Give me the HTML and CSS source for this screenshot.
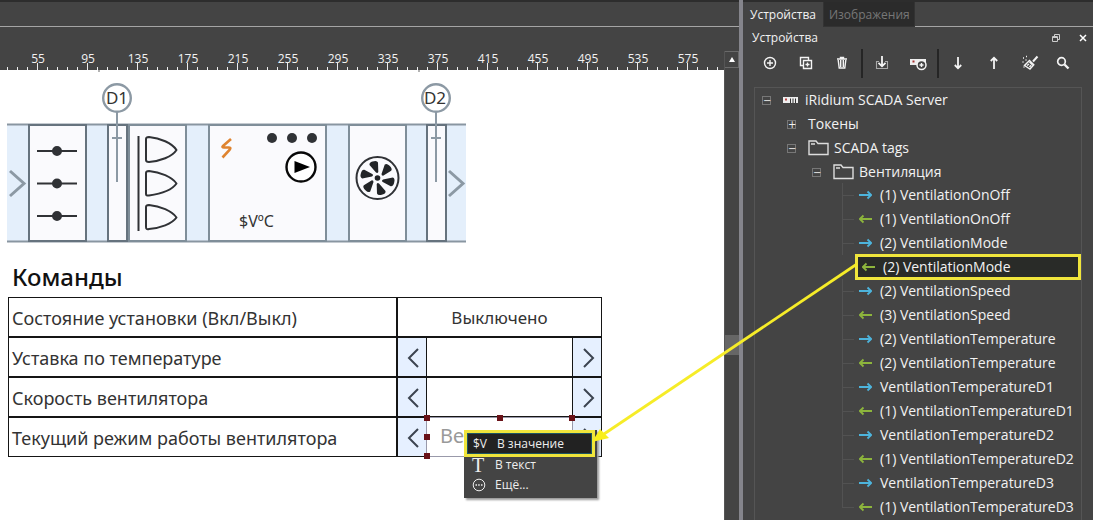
FILE: index.html
```html
<!DOCTYPE html>
<html lang="ru">
<head>
<meta charset="utf-8">
<title>iRidium SCADA</title>
<link rel="stylesheet" href="styles.css">
</head>
<body>
<div class="app">
  <main class="editor">
    <div class="editor-top"></div>
    <div class="workspace">
      <div class="work">
        <div class="ruler">
          <span>55</span><span>95</span><span>135</span><span>175</span><span>215</span><span>255</span><span>295</span><span>335</span><span>375</span><span>415</span><span>455</span><span>495</span><span>535</span><span>575</span>
        </div>
        <div class="canvas">
          <svg class="scheme" width="480" height="190" viewBox="0 70 480 190" role="img" aria-label="Вентиляция">
            <path d="M98 71h2M418 71h2" stroke="#666" stroke-width="1"/>
            <rect x="7" y="125" width="459" height="117" fill="#e4effb"/>
            <path d="M7 124.500H466M7 241.500H466" stroke="#8996a1" stroke-width="2"/>
            <g fill="#fafafd" stroke="#7f8e99" stroke-width="2">
              <rect x="129" y="125" width="57" height="116"/>
              <rect x="209" y="125" width="117" height="116"/>
              <rect x="349" y="125" width="57" height="116"/>
            </g>
            <g fill="#fafafd" stroke="#66737e" stroke-width="2">
              <rect x="29" y="125" width="57" height="116"/>
              <rect x="108" y="125" width="19" height="116"/>
              <rect x="427" y="125" width="19" height="116"/>
            </g>
            <g fill="none" stroke="#8c99a4" stroke-width="2">
              <path d="M117 112V182M112 138H122M436 112V182M431 138H441"/>
              <circle cx="117" cy="98" r="13.800" fill="#fff" stroke-width="2.400"/>
              <circle cx="436" cy="98" r="13.800" fill="#fff" stroke-width="2.400"/>
              <path d="M10 171L24 183.500L10 196M449 171L463 183.500L449 196" stroke-width="3"/>
            </g>
            <g fill="#303236" stroke="#303236" stroke-width="2">
              <path d="M37 151H77M37 183.500H77M37 216H77"/>
              <circle cx="57" cy="151" r="4"/><circle cx="57" cy="183.500" r="4"/><circle cx="57" cy="216" r="4"/>
            </g>
            <g fill="none" stroke="#303236" stroke-width="2" stroke-linejoin="round">
              <path d="M138.500 136V231"/>
              <path d="M146 139Q146 137 149 137C160 138 172 143 176.500 150C172 157 160 161 149 162Q146 162 146 160Z"/>
              <path d="M146 173Q146 171 149 171C160 172 172 177 176.500 183.500C172 190 160 194 149 195.500Q146 196 146 194Z"/>
              <path d="M146 207Q146 205 149 205C160 206 172 211 176.500 217.500C172 224 160 228 149 229Q146 230 146 227Z"/>
            </g>
            <path d="M231 139L223 146Q221.500 147.500 224 147.500H229Q231.500 147.500 229.500 150L222.500 157.500" fill="none" stroke="#df8430" stroke-width="2.600"/>
            <g fill="#303236"><circle cx="272" cy="138" r="5"/><circle cx="292" cy="138" r="5"/><circle cx="312" cy="138" r="5"/></g>
            <circle cx="301" cy="167" r="14.500" fill="#fff" stroke="#080808" stroke-width="2.400"/>
            <path d="M294.500 161L310 167L294.500 173Z"/>
            <circle cx="377.500" cy="178" r="21" fill="#fafafd" stroke="#303236" stroke-width="2"/>
            <g fill="#222427" transform="translate(377.500 178)">
              <circle r="2.800"/>
              <path id="blade" d="M-1.500 -5.500L-8 -13Q-8.500 -15.500 -5 -16.500Q-.500 -18 .500 -15.500L.800 -6Q0 -4.500 -1.500 -5.500Z"/>
              <use href="#blade" transform="rotate(60)"/><use href="#blade" transform="rotate(120)"/><use href="#blade" transform="rotate(180)"/><use href="#blade" transform="rotate(240)"/><use href="#blade" transform="rotate(300)"/>
            </g>
            <text class="sensor" x="117" y="104">D1</text>
            <text class="sensor" x="435" y="104">D2</text>
            <text class="temp" x="239" y="227">$VºC</text>
          </svg>
          <h1 class="heading">Команды</h1>
          <table class="commands">
            <colgroup><col class="c-label"><col class="c-step"><col class="c-value"><col class="c-step"></colgroup>
            <tr><th scope="row">Состояние установки (Вкл/Выкл)</th><td colspan="3" class="state">Выключено</td></tr>
            <tr><th scope="row">Уставка по температуре</th>
              <td class="step"><button aria-label="Меньше"><svg width="13" height="20" viewBox="0 0 13 20"><path d="M11 1L2 10L11 19"/></svg></button></td><td class="value"></td>
              <td class="step"><button aria-label="Больше"><svg width="13" height="20" viewBox="0 0 13 20"><path d="M2 1L11 10L2 19"/></svg></button></td></tr>
            <tr><th scope="row">Скорость вентилятора</th>
              <td class="step"><button aria-label="Меньше"><svg width="13" height="20" viewBox="0 0 13 20"><path d="M11 1L2 10L11 19"/></svg></button></td><td class="value"></td>
              <td class="step"><button aria-label="Больше"><svg width="13" height="20" viewBox="0 0 13 20"><path d="M2 1L11 10L2 19"/></svg></button></td></tr>
            <tr><th scope="row">Текущий режим работы вентилятора</th>
              <td class="step"><button aria-label="Меньше"><svg width="13" height="20" viewBox="0 0 13 20"><path d="M11 1L2 10L11 19"/></svg></button></td>
              <td class="value selected">Ве
                <i class="handle tl"></i><i class="handle tc"></i><i class="handle tr"></i><i class="handle ml"></i><i class="handle bl"></i>
                <div class="menu">
                  <button class="menu-item active"><span class="menu-icon">$V</span>В значение</button>
                  <button class="menu-item"><span class="menu-icon serif">T</span>В текст</button>
                  <button class="menu-item"><span class="menu-icon"><svg width="14" height="14" viewBox="0 0 14 14"><circle cx="7" cy="7" r="5.800" fill="none" stroke="#eee"/><path d="M3.500 7h1.500M6.200 7h1.500M9 7h1.500" stroke="#eee" stroke-width="1.500"/></svg></span>Ещё...</button>
                </div>
              </td>
              <td class="step"><button aria-label="Больше"><svg width="13" height="20" viewBox="0 0 13 20"><path d="M2 1L11 10L2 19"/></svg></button></td></tr>
          </table>
        </div>
      </div>
      <div class="scroll">
        <button class="scroll-up" aria-label="Вверх"><svg width="6" height="5" viewBox="0 0 6 5"><path d="M3 0L6 5H0Z" fill="#fff"/></svg></button>
        <div class="scroll-thumb"></div>
      </div>
    </div>
  </main>
  <aside class="panel">
    <div class="tabs">
      <button class="tab on">Устройства</button><button class="tab">Изображения</button><span class="tab-rest"></span>
    </div>
    <header class="title"><span>Устройства</span>
      <button aria-label="Открепить"><svg width="8" height="8" viewBox="0 0 8 8" fill="none" stroke="#ccc"><path d="M2.500 2V.500H7.500V5.500H6"/><path d="M.500 2.500H5.500V7.500H.500ZM.500 3.500H5.500"/></svg></button>
      <button aria-label="Закрыть"><svg width="8" height="8" viewBox="0 0 8 8"><path d="M1 1L7 7M7 1L1 7" stroke="#fff" stroke-width="1.500"/></svg></button>
    </header>
    <div class="toolbar">
      <button aria-label="Добавить"><svg viewBox="0 0 16 16"><circle cx="8" cy="8" r="5.500"/><path d="M8 5V11M5 8H11"/></svg></button>
      <button aria-label="Дублировать"><svg viewBox="0 0 16 16" stroke-width="1.200"><path d="M5.500 10.500H2.500V2.500H10.500V5.500M5.500 5.500H13.500V13.500H5.500ZM9.500 7.500V11.500M7.500 9.500H11.500"/></svg></button>
      <button aria-label="Удалить"><svg viewBox="0 0 16 16"><path d="M3 4H13M6.500 3.500V2.500H9.500V3.500M4.200 5L5.200 13H10.800L11.800 5M6.700 5V12M9.300 5V12"/></svg></button>
      <span class="sep"></span>
      <button aria-label="Импорт"><svg viewBox="0 0 16 16"><path d="M5 6.500H2.500V13.500H13.500V6.500H11" stroke="#aaa" stroke-width="1.100"/><path d="M8 1V11M4.500 7.800L8 11.300L11.500 7.800" stroke-width="1.800"/></svg></button>
      <button aria-label="Добавить устройство"><svg viewBox="0 0 16 16"><path d="M0 4H16V10H0Z" fill="#eee" stroke="none"/><path d="M2.500 6.500H4.500" stroke="#a33" stroke-width="2"/><circle cx="11.500" cy="10" r="4.500" fill="#444" stroke-width="1.500"/><path d="M11.500 8V12M9.500 10H13.500"/></svg></button>
      <span class="sep"></span>
      <button aria-label="Вниз"><svg viewBox="0 0 16 16"><path d="M8 2V13M4.800 10L8 13.300L11.200 10" stroke-width="1.800"/></svg></button>
      <button aria-label="Вверх"><svg viewBox="0 0 16 16"><path d="M8 14V3M4.800 6L8 2.700L11.200 6" stroke-width="1.800"/></svg></button>
      <button aria-label="Очистить"><svg viewBox="0 0 16 16" stroke-width="1.200"><path d="M15.500 1.500L11 6.500" stroke-width="2"/><path d="M7.500 5.500L11.800 9.800L8 14L2.500 10.500ZM7.500 7L10.500 10M5 10.500L7 9M7.500 12L9 10.200"/><path d="M1 3H2M4 1.500H5M3.500 5H4.500M.500 7H1.500M1.500 12H2.500"/></svg></button>
      <button aria-label="Поиск"><svg viewBox="0 0 16 16"><circle cx="6.500" cy="6.500" r="3.800" stroke-width="1.700"/><path d="M9.500 9.500L13.500 13.500" stroke-width="2.400"/></svg></button>
    </div>
    <div class="tree">
      <div class="node"><button class="exp" aria-label="Свернуть">−</button><svg class="server" width="15" height="7" viewBox="0 0 15 7"><path d="M0 0H15V6H0Z" fill="#eee"/><path d="M2 2.500H4" stroke="#b44" stroke-width="2"/><path d="M7.500 1.500V6M10 1.500V6M12.500 1.500V6" stroke="#333"/></svg>iRidium SCADA Server</div>
      <div class="node l1"><button class="exp" aria-label="Развернуть">+</button>Токены</div>
      <div class="node l1 folder"><button class="exp" aria-label="Свернуть">−</button><svg width="21" height="16" viewBox="0 0 21 16"><path d="M1 14.500V1H8L10 3.500H20V14.500ZM3 4H7" /></svg>SCADA tags</div>
      <div class="node l2 folder"><button class="exp" aria-label="Свернуть">−</button><svg width="21" height="16" viewBox="0 0 21 16"><path d="M1 14.500V1H8L10 3.500H20V14.500ZM3 4H7" /></svg>Вентиляция</div>
      <ul class="tags">
        <li class="in">(1) VentilationOnOff</li>
        <li class="out">(1) VentilationOnOff</li>
        <li class="in">(2) VentilationMode</li>
        <li class="out picked">(2) VentilationMode</li>
        <li class="in">(2) VentilationSpeed</li>
        <li class="out">(3) VentilationSpeed</li>
        <li class="in">(2) VentilationTemperature</li>
        <li class="out">(2) VentilationTemperature</li>
        <li class="in">VentilationTemperatureD1</li>
        <li class="out">(1) VentilationTemperatureD1</li>
        <li class="in">VentilationTemperatureD2</li>
        <li class="out">(1) VentilationTemperatureD2</li>
        <li class="in">VentilationTemperatureD3</li>
        <li class="out last">(1) VentilationTemperatureD3</li>
      </ul>
    </div>
  </aside>
  <svg class="link" width="280" height="190" viewBox="585 260 280 190" aria-hidden="true"><path d="M857 264L604 434" stroke="#f6ec28" stroke-width="2.800"/><path d="M592 442L600 429L609 438Z" fill="#f9ef1c"/></svg>
</div>
<script src="tree.js"></script>
</body>
</html>
```

FILE: tree.js
```js
// Puts the direction arrow in front of every tag of the tree.
var paths = {
  in: "M0 6H12M8.500 2.500L12.200 6L8.500 9.500",
  out: "M13 6H1M4.500 2.500L.800 6L4.500 9.500"
};
document.querySelectorAll(".tags li").forEach(function (li) {
  var dir = li.classList.contains("in") ? "in" : "out";
  li.insertAdjacentHTML("afterbegin",
    '<svg class="dir" width="13" height="12" viewBox="0 0 13 12"><path d="' + paths[dir] + '"/></svg>');
});
```

FILE: styles.css
```css
* { box-sizing: border-box; }
body {
  margin: 0;
  background: #444;
  color: #f2f2f2;
  font: 12px/16px "Open Sans", "Noto Sans", sans-serif;
}
button {
  border: 0;
  padding: 0;
  background: none;
  color: inherit;
  font: inherit;
}
svg { display: block; }
.app {
  position: relative;
  display: flex;
  min-height: 100vh;
  overflow: hidden;
}

/* editor */
.editor {
  flex: 1;
  min-width: 0;
  display: flex;
  flex-direction: column;
  border-top: 2px solid #2d2d2d;
}
.editor-top { height: 25px; border-bottom: 1px solid #a5a5a5; }
.workspace { flex: 1; display: flex; }
.work { flex: 1; min-width: 0; display: flex; flex-direction: column; }
.ruler {
  height: 43px;
  padding: 24px 0 0 13px;
  display: flex;
  overflow: hidden;
  background:
    repeating-linear-gradient(90deg, #eee 0 1px, transparent 1px 50px) 37px 36px / 100% 7px no-repeat,
    repeating-linear-gradient(90deg, #eee 0 1px, transparent 1px 10px) 7px 40px / 100% 3px no-repeat;
}
.ruler span { flex: 0 0 50px; text-align: center; }
.canvas { flex: 1; background: #fff; color: #222; }
.sensor, .temp { fill: #333; font: 17px "Noto Sans", sans-serif; }
.sensor { text-anchor: middle; }
.temp { font-size: 16px; }
.heading {
  margin: 0;
  padding: 0 12px 4px;
  color: #111;
  font: 500 24px/33px "Noto Sans", sans-serif;
}
.commands {
  width: 594px;
  margin-left: 8px;
  table-layout: fixed;
  border-collapse: separate;
  border-spacing: 0;
  color: #333;
  font: 18px/22px "Noto Sans", sans-serif;
}
.c-label { width: 389px; }
.c-step { width: 29px; }
.c-value { width: 147px; }
.commands th, .commands td {
  height: 40px;
  padding: 2px 0 0;
  border: 1px solid #151515;
}
.commands th { padding: 2px 4px 0 3px; font-weight: 400; text-align: left; white-space: nowrap; }
.commands .state { text-align: center; font-size: 17px; }
.commands .step { padding-left: 2px; background: #e6f0ff; border-right-width: 0; }
.commands .value + .step { border-left-width: 0; border-right-width: 1px; }
.step button { width: 100%; display: grid; place-items: center; }
.step path { fill: none; stroke: #3c4450; stroke-width: 2; }
.commands .selected {
  position: relative;
  padding: 0 0 2px 13px;
  border-color: #99a;
  color: #999;
  font-size: 20px;
}
.handle { position: absolute; width: 6px; height: 6px; background: #6a1218; }
.tl { left: -3px; top: -3px; }
.tc { left: 70px; top: -3px; }
.tr { right: -3px; top: -3px; }
.ml { left: -3px; top: 16px; }
.bl { left: -3px; bottom: -3px; }

.menu {
  position: absolute;
  z-index: 2;
  left: 37px;
  top: 12px;
  width: 133px;
  padding-bottom: 3px;
  background: #444;
  box-shadow: 2px 2px 2px #999;
  color: #eee;
  font: 12px/20px "Open Sans", "Noto Sans", sans-serif;
}
.menu-item { width: 100%; height: 20px; padding-left: 4px; display: flex; align-items: center; }
.menu-item.active {
  width: 131px;
  height: 27px;
  margin-bottom: -2px;
  padding-left: 3px;
  background: #222;
  border: 3px solid #f0e53c;
  outline: 1px solid #1d5662;
  outline-offset: -4px;
}
.menu-icon { width: 27px; padding-left: 4px; flex: none; text-align: left; }
.active .menu-icon { padding-left: 3px; }
.serif { font: 20px/20px "Liberation Serif", serif; }

.scroll {
  width: 15px;
  margin-top: 24px;
  display: flex;
  flex-direction: column;
  border-left: 1px solid #555;
}
.scroll-up { height: 17px; display: grid; place-items: center; border: 1px solid #6a6a6a; border-left: 0; }
.scroll-thumb { height: 20px; margin-top: 267px; background: #666; }

/* devices panel */
.panel {
  width: 354px;
  display: flex;
  flex-direction: column;
  border-left: 4px solid #85858c;
}
.tabs { display: flex; height: 27px; border-top: 2px solid #2d2d2d; }
.tab {
  padding: 1px 4px 0 5px;
  background: #2b2b2b;
  border: 1px solid #333;
  border-top: 0;
  color: #777;
}
.tab.on { padding: 0 7px; border: 0; background: #444; color: #f2f2f2; }
.tab-rest { flex: 1; border-bottom: 1px solid #a5a5a5; }
.title { display: flex; align-items: center; gap: 19px; height: 21px; padding: 0 6px 0 9px; }
.title span { flex: 1; }
.toolbar { display: flex; align-items: center; height: 31px; padding: 0 9px; }
.toolbar button { flex: 0 0 36px; height: 18px; display: grid; place-items: start center; }
.toolbar button:last-child { flex-basis: 30px; }
.toolbar svg { width: 16px; height: 16px; fill: none; stroke: #f4f4f4; stroke-width: 1.400; overflow: visible; }
.sep { width: 2px; height: 29px; margin: 0 1px; background: #252525; }
.tree {
  flex: 1;
  margin: 8px 11px 0;
  border: 1px solid #555;
  border-bottom: 0;
  font-size: 14px;
  line-height: 24px;
  white-space: nowrap;
}
.node { display: flex; align-items: center; height: 24px; padding-left: 7px; }
.l1 { padding-left: 32px; }
.l2 { padding-left: 57px; }
.exp {
  width: 9px;
  height: 9px;
  margin-right: 12px;
  border: 1px solid #777;
  font: 10px/7px "DejaVu Sans", sans-serif;
  display: grid;
  place-items: center;
}
.server { margin-right: 7px; }
.folder svg { margin-right: 5px; fill: none; stroke: #ddd; stroke-width: 1.400; }
.tags { margin: -1px 0 0 87px; padding: 0; list-style: none; }
.tags li {
  display: flex;
  align-items: center;
  gap: 8px;
  height: 24px;
  padding-left: 17px;
  background:
    linear-gradient(#525252, #525252) 0 50% / 12px 1px no-repeat,
    linear-gradient(#525252, #525252) 0 0 / 1px 100% no-repeat;
}
.tags .last { background-size: 12px 1px, 1px 12px; }
.dir { fill: none; stroke: #4db4dc; stroke-width: 1.800; }
.out .dir { stroke: #8db53c; }
.tags .picked {
  height: 26px;
  margin: -1px 0 -1px 13px;
  padding-left: 4px;
  background: #292b28;
  border: 3px solid #f0e53c;
  line-height: 18px;
}
.link { position: absolute; left: 585px; top: 260px; z-index: 3; }
```
